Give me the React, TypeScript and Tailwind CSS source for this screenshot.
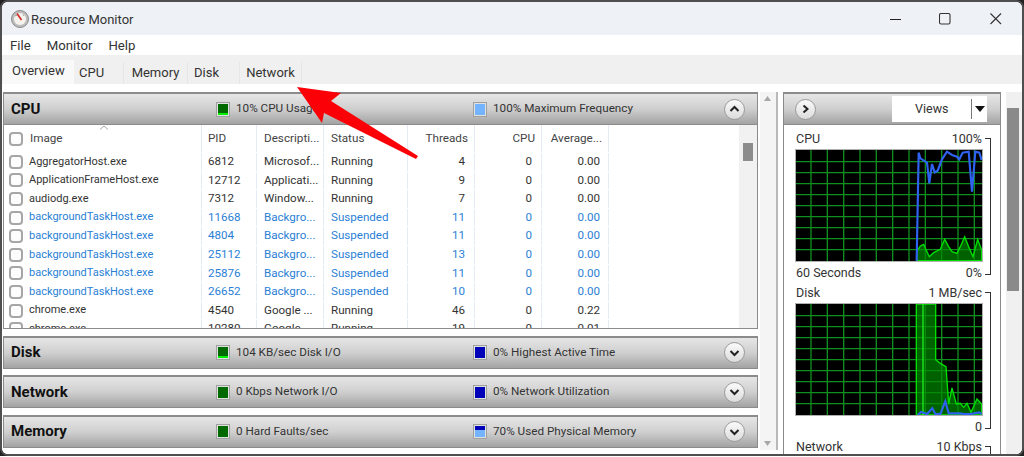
import React from "react";

const F = { fontFamily: 'Roboto, "Noto Sans", Arial, sans-serif' };

type Row = [string, string, string, string, string, string, string, boolean?];
const rows: Row[] = [
  ["AggregatorHost.exe", "6812", "Microsof...", "Running", "4", "0", "0.00"],
  ["ApplicationFrameHost.exe", "12712", "Applicati...", "Running", "9", "0", "0.00"],
  ["audiodg.exe", "7312", "Window...", "Running", "7", "0", "0.00"],
  ["backgroundTaskHost.exe", "11668", "Backgro...", "Suspended", "11", "0", "0.00", true],
  ["backgroundTaskHost.exe", "4804", "Backgro...", "Suspended", "11", "0", "0.00", true],
  ["backgroundTaskHost.exe", "25112", "Backgro...", "Suspended", "13", "0", "0.00", true],
  ["backgroundTaskHost.exe", "25876", "Backgro...", "Suspended", "11", "0", "0.00", true],
  ["backgroundTaskHost.exe", "26652", "Backgro...", "Suspended", "10", "0", "0.00", true],
  ["chrome.exe", "4540", "Google ...", "Running", "46", "0", "0.22"],
  ["chrome.exe", "10280", "Google ...", "Running", "19", "0", "0.01"],
];

function Chevron({ dir }: { dir: "up" | "down" | "right" }) {
  const d = dir === "up" ? "M1.5 6L5.5 2L9.5 6" : dir === "down" ? "M1.5 2L5.5 6L9.5 2" : "M3.5 0.5L7.5 4L3.5 7.5";
  return (
    <div className="flex h-[21px] w-[21px] items-center justify-center rounded-full border border-[#9a9a9a] bg-gradient-to-b from-[#fafafa] to-[#dcdcdc]">
      <svg width="11" height="8" viewBox="0 0 11 8" fill="none">
        <path d={d} stroke="#222" strokeWidth="2" />
      </svg>
    </div>
  );
}

function Swatch({ kind }: { kind: "green" | "greenHi" | "blue" | "light" | "mem" }) {
  const cls =
    kind === "blue"
      ? "bg-[#0000b8]"
      : kind === "light"
        ? "bg-[#74b4ff]"
        : kind === "mem"
          ? "bg-gradient-to-b from-[#0000b8] from-[35%] to-[#74b4ff] to-[35%]"
          : kind === "greenHi"
            ? "bg-gradient-to-b from-[#006a00] from-[78%] to-[#00f000] to-[78%]"
            : "bg-[#006a00]";
  return <div className={`h-[13px] w-[12px] border border-[#dfe3e0] outline outline-1 outline-[#a0a0a0] ${cls}`} />;
}

function Header({
  title,
  a,
  aText,
  b,
  bText,
  dir,
}: {
  title: string;
  a: "green" | "greenHi";
  aText: string;
  b: "blue" | "light" | "mem";
  bText: string;
  dir: "up" | "down";
}) {
  return (
    <div className="flex h-[33px] items-center border border-t-[2px] border-[#8b8b8b] bg-gradient-to-b from-[#e6e6e6] via-[#cfcfcf] to-[#a3a3a3]">
      <div className="w-[209px] pl-[7px] text-[15px] font-bold text-[#111]">{title}</div>
      <div className="ml-[4px] w-[16px]">
        <Swatch kind={a} />
      </div>
      <div className="w-[241px] pl-[3px] text-[11.7px] text-[#333]">{aText}</div>
      <div className="w-[16px]">
        <Swatch kind={b} />
      </div>
      <div className="flex-1 pl-[3px] text-[11.7px] text-[#333]">{bText}</div>
      <div className="mr-[12px]">
        <Chevron dir={dir} />
      </div>
    </div>
  );
}

function Checkbox() {
  return <div className="h-[14px] w-[14px] shrink-0 rounded-[4px] border-2 border-[#a6a6a6] bg-[#fdfdfd]" />;
}

const line = "border-r border-[#e3ecf5]";

function Table() {
  return (
    <div className="flex h-[204px] border-x border-b border-[#8b8b8b] bg-white">
      <div className="relative w-[735px] overflow-hidden">
        <svg width="10" height="5" viewBox="0 0 10 5" className="absolute left-[95px] top-[0px]">
          <path d="M1 4.5L5 1L9 4.5" fill="none" stroke="#a8a8a8" />
        </svg>
        <div className="flex h-[27px] items-center text-[11.7px] text-[#444]">
          <div className={`flex h-full w-[198px] shrink-0 items-center gap-[7px] pl-[5px] ${line}`}>
            <Checkbox />
            <span>Image</span>
          </div>
          <div className={`flex h-full w-[55px] shrink-0 items-center pl-[6px] ${line}`}>PID</div>
          <div className={`flex h-full w-[67px] shrink-0 items-center pl-[7px] ${line}`}>Descripti...</div>
          <div className={`flex h-full w-[84px] shrink-0 items-center pl-[7px] ${line}`}>Status</div>
          <div className={`flex h-full w-[67px] shrink-0 items-center justify-end pr-[6px] ${line}`}>Threads</div>
          <div className={`flex h-full w-[67px] shrink-0 items-center justify-end pr-[6px] ${line}`}>CPU</div>
          <div className={`flex h-full w-[67px] shrink-0 items-center justify-end pr-[6px] ${line}`}>Average...</div>
        </div>
        {rows.map((r, i) => {
          const color = r[7] ? "text-[#2a7fd5]" : "text-[#333]";
          return (
            <div key={i} className={`flex h-[18.6px] items-center pt-[1px] text-[11.6px] ${color}`}>
              <div className={`flex h-full w-[198px] shrink-0 items-center gap-[6px] pl-[5px] ${line}`}>
                <Checkbox />
                <span className="whitespace-nowrap text-[11px]">{r[0]}</span>
              </div>
              <div className={`flex h-full w-[55px] shrink-0 items-center pl-[6px] ${line}`}>{r[1]}</div>
              <div className={`flex h-full w-[67px] shrink-0 items-center whitespace-nowrap pl-[7px] ${line}`}>{r[2]}</div>
              <div className={`flex h-full w-[84px] shrink-0 items-center pl-[7px] ${line}`}>{r[3]}</div>
              <div className={`flex h-full w-[67px] shrink-0 items-center justify-end pr-[9px] ${line}`}>{r[4]}</div>
              <div className={`flex h-full w-[67px] shrink-0 items-center justify-end pr-[9px] ${line}`}>{r[5]}</div>
              <div className={`flex h-full w-[67px] shrink-0 items-center justify-end pr-[8px] ${line}`}>{r[6]}</div>
            </div>
          );
        })}
      </div>
      <div className="flex-1 bg-[#f1f1f1] pt-[18px]">
        <div className="mx-auto h-[18px] w-[10px] bg-[#8c8c8c]" />
      </div>
    </div>
  );
}

function Grid({ y0 }: { y0: number }) {
  const vs = [92, 141, 190, 239, 288, 337, 386, 435, 484, 533, 582];
  const hs = Array.from({ length: 9 }, (_, i) => y0 + 35 + i * 33);
  return (
    <g stroke="#0f8f1f" strokeWidth="4">
      {vs.map((x) => (
        <line key={x} x1={x} x2={x} y1={y0} y2={y0 + 333} />
      ))}
      {hs.map((y) => (
        <line key={y} x1="47" x2="605" y1={y} y2={y} />
      ))}
    </g>
  );
}

function CpuGraph() {
  return (
    <svg width="186" height="111" viewBox="47 30 558 333" className="block bg-black outline outline-1 outline-[#b0b0b0]">
      <Grid y0={30} />
      <path
        d="M409 362L409 335L420 318L430 313L440 335L447 350L460 338L480 328L493 298L505 320L515 335L530 340L540 320L553 290L565 320L578 350L592 298L604 330L604 362Z"
        fill="#008a00"
        fillOpacity="0.7"
        stroke="#00e000"
        strokeWidth="4"
      />
      <path
        d="M409 362L415 38L420 55L440 68L447 130L455 72L463 97L472 92L485 58L500 35L515 45L530 50L537 58L547 38L565 35L575 155L585 35L597 38L604 60"
        fill="none"
        stroke="#2f62f0"
        strokeWidth="6.5"
      />
    </svg>
  );
}

function DiskGraph() {
  return (
    <svg width="186" height="111" viewBox="47 40 558 333" className="block bg-black outline outline-1 outline-[#b0b0b0]">
      <Grid y0={40} />
      <path
        d="M408 373L408 40L466 40L466 207L480 218L497 228L505 340L515 292L528 340L540 338L550 350L560 338L572 365L590 325L604 340L604 373Z"
        fill="#008a00"
        fillOpacity="0.7"
        stroke="#00e000"
        strokeWidth="4"
      />
      <line x1="428" x2="428" y1="40" y2="373" stroke="#20f020" strokeWidth="4" />
      <path
        d="M413 373L422 364L440 370L456 353L465 370L480 370L495 332L505 368L540 368L550 370L570 370L597 365L604 370"
        fill="none"
        stroke="#2f62f0"
        strokeWidth="6.5"
      />
    </svg>
  );
}

function Block({
  title,
  top,
  bottomL,
  bottomR,
  children,
}: {
  title: string;
  top: string;
  bottomL?: string;
  bottomR?: string;
  children?: React.ReactNode;
}) {
  return (
    <div className="mb-[7px] flex h-[147px] shrink-0 text-[12.5px] text-[#333]">
      <div className="w-[186px]">
        <div className="mb-[5px] flex h-[13px] items-center justify-between leading-[13px]">
          <span>{title}</span>
          <span>{top}</span>
        </div>
        {children}
        <div className="mt-[5px] flex h-[13px] items-center justify-between leading-[13px]">
          <span>{bottomL}</span>
          <span>{bottomR}</span>
        </div>
      </div>
      <div className="ml-[3px] mt-[6px] h-[137px] w-[6px] border-y border-r border-[#333]" />
    </div>
  );
}

export default function App() {
  return (
    <div className="h-[457px] w-[1024px] overflow-hidden bg-white" style={F}>
      <div className="h-[456px] bg-[#222]">
        <div className="relative h-[456px] overflow-hidden rounded-[8px] border-[2px] border-[#4f4f4f] bg-white">
          {/* Title bar */}
          <div className="flex h-[33px] items-center bg-[#eef2f7]">
            <svg width="18" height="18" viewBox="0 0 18 18" className="ml-[9px]">
              <circle cx="9" cy="9" r="8.5" fill="#bdbdbd" stroke="#8a8a8a" />
              <circle cx="9" cy="9" r="6" fill="#f6f3ee" />
              <path d="M6 3.5L10.5 10" stroke="#d0342c" strokeWidth="1.8" />
              <path d="M4 6L6 5M12 4.5L13 6" stroke="#9a9a9a" />
            </svg>
            <span className="ml-[2px] pt-[2px] text-[13px] text-[#333]">Resource Monitor</span>
            <div className="ml-auto flex items-center">
              <svg width="12" height="12" viewBox="0 0 12 12" className="mr-[37px]">
                <path d="M0 6.5H11" stroke="#222" strokeWidth="1" />
              </svg>
              <svg width="12" height="12" viewBox="0 0 12 12" className="mr-[39px]">
                <rect x="0.5" y="0.5" width="10.5" height="10.5" rx="1.5" fill="none" stroke="#333" strokeWidth="1.1" />
              </svg>
              <svg width="12" height="12" viewBox="0 0 12 12" className="mr-[20px]">
                <path d="M0.5 0.5L11 11M11 0.5L0.5 11" stroke="#333" strokeWidth="1.1" />
              </svg>
            </div>
          </div>
          {/* Menu */}
          <div className="flex h-[20px] items-center gap-[16px] bg-white pl-[8px] pt-[1px] text-[13.2px] text-[#333]">
            <span>File</span>
            <span>Monitor</span>
            <span>Help</span>
          </div>
          {/* Tabs */}
          <div className="flex h-[29px] items-end bg-[#f0f0f0] pl-[1px] text-[13px] text-[#333]">
            <div className="flex h-[24px] w-[71px] items-center bg-[#f9f9f9] pb-[2px] pl-[9px]">Overview</div>
            <div className="flex h-[22px] w-[50px] items-center border-r border-[#e6e6e6] pl-[5px]">CPU</div>
            <div className="flex h-[22px] w-[64px] items-center justify-center border-r border-[#e6e6e6]">Memory</div>
            <div className="flex h-[22px] w-[52px] items-center border-r border-[#e6e6e6] pl-[6px]">Disk</div>
            <div className="flex h-[22px] w-[62px] items-center justify-center border-r border-[#e6e6e6]">Network</div>
          </div>
          {/* Body */}
          <div className="flex bg-white pt-[8px]">
            <div className="ml-[1px] w-[755px] shrink-0">
              <Header title="CPU" a="greenHi" aText="10% CPU Usage" b="light" bText="100% Maximum Frequency" dir="up" />
              <Table />
              <div className="mt-[6.5px]">
                <Header title="Disk" a="greenHi" aText="104 KB/sec Disk I/O" b="blue" bText="0% Highest Active Time" dir="down" />
              </div>
              <div className="mt-[6.5px]">
                <Header title="Network" a="green" aText="0 Kbps Network I/O" b="blue" bText="0% Network Utilization" dir="down" />
              </div>
              <div className="mt-[6.5px]">
                <Header title="Memory" a="green" aText="0 Hard Faults/sec" b="mem" bText="70% Used Physical Memory" dir="down" />
              </div>
            </div>
            {/* Left scrollbar */}
            <div className="ml-[2px] flex h-[358px] w-[18px] shrink-0 flex-col justify-between border-r-[2px] border-[#b9b9b9] bg-[#f4f4f4] py-[4px] pr-[1px]">
              <svg width="7" height="5" viewBox="0 0 7 5" className="mx-auto">
                <path d="M3.5 0L7 5H0Z" fill="#a8a8a8" />
              </svg>
              <svg width="7" height="5" viewBox="0 0 7 5" className="mx-auto">
                <path d="M0 0H7L3.5 5Z" fill="#a8a8a8" />
              </svg>
            </div>
            {/* Right pane */}
            <div className="ml-[5px] w-[218px] shrink-0">
              <div className="flex h-[33px] items-center border border-t-[2px] border-[#8b8b8b] bg-gradient-to-b from-[#e6e6e6] via-[#cfcfcf] to-[#a3a3a3]">
                <div className="ml-[11px]">
                  <Chevron dir="right" />
                </div>
                <div className="ml-[76px] flex h-[26px] w-[95px] items-center bg-white pl-[23px] text-[12.5px] text-[#333]">
                  <span className="w-[56px]">Views</span>
                  <div className="h-[20px] w-[1px] bg-[#777]" />
                  <svg width="10" height="6" viewBox="0 0 10 6" className="ml-[3px]">
                    <path d="M0 0H10L5 6Z" fill="#111" />
                  </svg>
                </div>
              </div>
              <div className="h-[330px] overflow-hidden border-x border-[#8b8b8b] bg-white pl-[12px] pt-[7px]">
                <Block title="CPU" top="100%" bottomL="60 Seconds" bottomR="0%">
                  <CpuGraph />
                </Block>
                <Block title="Disk" top="1 MB/sec" bottomR="0" bottomL=" ">
                  <DiskGraph />
                </Block>
                <Block title="Network" top="10 Kbps" />
              </div>
            </div>
            {/* Right scrollbar */}
            <div className="ml-[5px] flex-1 bg-[#f0f0f0] pl-[1px] pt-[16px]">
              <div className="h-[183px] w-[12px] bg-[#8a8a8a]" />
            </div>
          </div>
          {/* Red annotation arrow */}
          <svg width="135" height="80" viewBox="0 0 135 80" className="absolute left-[294px] top-[83px]">
            <path d="M1 2L45 8L35 16L122 71L120 74L28 28L26 38Z" fill="#fb0007" />
          </svg>
        </div>
      </div>
    </div>
  );
}
